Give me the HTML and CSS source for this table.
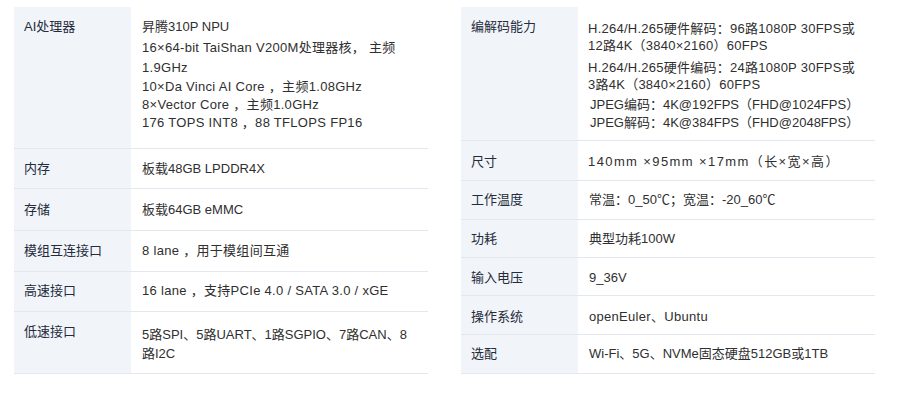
FILE: index.html
```html
<!DOCTYPE html>
<html lang="zh-CN">
<head>
<meta charset="utf-8">
<title>规格参数</title>
<link rel="stylesheet" href="styles.css">
</head>
<body>
<div class="specs">
  <div class="table">
    <div class="row r-ai">
      <div class="k">AI处理器</div>
      <div class="v">
        <p>昇腾310P NPU</p>
        <p class="ls lh20 mt2">16×64-bit TaiShan V200M处理器核， 主频<br>1.9GHz</p>
        <p class="ls">10×Da Vinci AI Core ，主频1.08GHz<br>8×Vector Core ，主频1.0GHz<br>176 TOPS INT8 ，88 TFLOPS FP16</p>
      </div>
    </div>
    <div class="row h40 t11"><div class="k">内存</div><div class="v">板载48GB LPDDR4X</div></div>
    <div class="row h42 t12"><div class="k">存储</div><div class="v">板载64GB eMMC</div></div>
    <div class="row h41 t11"><div class="k">模组互连接口</div><div class="v ls">8 lane ，用于模组间互通</div></div>
    <div class="row h40 t10"><div class="k">高速接口</div><div class="v ls">16 lane ，支持PCIe 4.0 / SATA 3.0 / xGE</div></div>
    <div class="row h62 t11"><div class="k">低速接口</div><div class="v lh19 t13">5路SPI、5路UART、1路SGPIO、7路CAN、8<br>路I2C</div></div>
  </div>

  <div class="table">
    <div class="row r-codec">
      <div class="k">编解码能力</div>
      <div class="v">
        <p class="lh17 ls2">H.264/H.265硬件解码：96路1080P 30FPS或<br>12路4K（3840×2160）60FPS</p>
        <p class="lh17 ls2 mt5">H.264/H.265硬件编码：24路1080P 30FPS或<br>3路4K（3840×2160）60FPS</p>
        <p class="mt3 ind">JPEG编码：4K@192FPS（FHD@1024FPS）<br>JPEG解码：4K@384FPS（FHD@2048FPS）</p>
      </div>
    </div>
    <div class="row h40 t12"><div class="k">尺寸</div><div class="v wide">140mm ×95mm ×17mm（长×宽×高）</div></div>
    <div class="row h39 t10"><div class="k">工作温度</div><div class="v">常温：0_50℃；宽温：-20_60℃</div></div>
    <div class="row h38 t10"><div class="k">功耗</div><div class="v">典型功耗100W</div></div>
    <div class="row h38 t11"><div class="k">输入电压</div><div class="v">9_36V</div></div>
    <div class="row h39 t12"><div class="k">操作系统</div><div class="v ls">openEuler、Ubuntu</div></div>
    <div class="row h39 t10"><div class="k">选配</div><div class="v">Wi-Fi、5G、NVMe固态硬盘512GB或1TB</div></div>
  </div>
</div>
</body>
</html>
```

FILE: styles.css
```css
* { box-sizing: border-box; }
html, body { margin: 0; padding: 0; background: #ffffff; }
body {
  font-family: "Liberation Sans", "Noto Sans CJK SC", sans-serif;
  font-size: 13px;
  line-height: 18px;
  color: #2f2f2f;
}
p { margin: 0; }

.specs {
  display: flex;
  gap: 33px;
  padding: 7px 0 0 14px;
}

.table {
  width: 414px;
  display: flex;
  flex-direction: column;
}

.row {
  display: grid;
  grid-template-columns: 117px 1fr;
  border-bottom: 1px solid #e3e8f0;
}

.k {
  background: #f1f5fa;
  color: #252b3a;
  padding: 11px 10px 0 10px;
}

.v {
  padding: 11px 10px 0 11px;
}

/* row heights (border included) */
.r-ai { height: 142px; }
.r-codec { height: 134px; }
.h38 { height: 38px; }
.h39 { height: 39px; }
.h40 { height: 40px; }
.h41 { height: 41px; }
.h42 { height: 42px; }
.h62 { height: 62px; }

/* text offsets inside rows */
.t10 .k, .t10 .v { padding-top: 10px; }
.t11 .k, .t11 .v { padding-top: 11px; }
.t12 .k, .t12 .v { padding-top: 12px; }
.row .v.t13 { padding-top: 13px; }
.r-codec .v { padding-top: 13px; padding-left: 10px; }

.lh17 { line-height: 17px; }
.lh19 { line-height: 19px; }
.lh20 { line-height: 20px; }
.mt2 { margin-top: 2px; }
.mt3 { margin-top: 3px; }
.mt5 { margin-top: 5px; }

.ls { letter-spacing: 0.3px; }
.ls2 { letter-spacing: 0.25px; }
.wide { letter-spacing: 1.4px; padding-left: 10px; }
.ind { padding-left: 2px; }
```
